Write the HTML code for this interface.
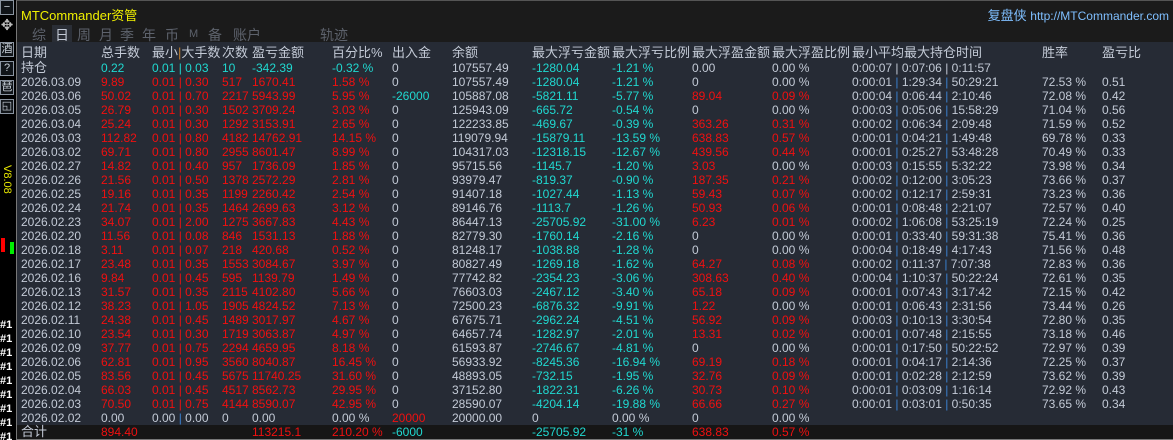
<!DOCTYPE html><html><head><meta charset="utf-8"><style>
*{margin:0;padding:0;box-sizing:border-box}
html,body{width:1173px;height:440px;overflow:hidden}
body{background:#000;font-family:"Liberation Sans","Noto Sans CJK SC",sans-serif;font-size:12px;position:relative}
#left{position:absolute;left:0;top:0;width:15px;height:440px;background:#000;overflow:hidden}
.btn{position:absolute;left:0;width:14px;height:15px;border:1px solid #8a94a0;color:#c8d0d8;font-size:11px;line-height:13px;text-align:center;background:#101418}
#top{position:absolute;left:16px;top:0;width:1157px;height:42px;background:#1b1b1b;border-top:1px solid #555;border-left:1px solid #777}
#tbl{position:absolute;left:16px;top:42px;width:1157px;height:398px;background:#262b35;border-left:1px solid #777}
.row{position:absolute;left:0;height:14px;width:1157px;line-height:14px;color:#c3cad6;white-space:nowrap}
.row span{position:absolute}
.h{font-size:13px;color:#c3cad6}
.a{left:4px}.b{left:84px}.cc{left:135px}.d{left:205px}.e{left:235px}.f{left:315px}.g{left:375px}.i{left:435px}.j{left:515px}.k{left:595px}.l{left:675px}.m{left:755px}.n{left:835px}.o{left:1025px}.p{left:1085px}
.r{color:#f01010}.c{color:#20d8d0}
.p1{color:#3a80d0;font-style:normal}
.tab{position:absolute;top:24px;color:#5d626c;font-size:14px}
</style></head><body>
<div id="left">
<div class="btn" style="top:0">−</div>
<div class="btn" style="top:19px;border:none;background:none;font-size:15px;color:#bbb">✥</div>
<div class="btn" style="top:42px">酒</div>
<div class="btn" style="top:61px">?</div>
<div class="btn" style="top:80px">琶</div>
<div class="btn" style="top:99px">◱</div>
<div style="position:absolute;top:165px;color:#e8e800;font-size:11px;transform:rotate(90deg);transform-origin:left top;left:13px;">V8.08</div>
<div style="position:absolute;left:1px;top:238px;width:4px;height:14px;background:#f00"></div>
<div style="position:absolute;left:10px;top:242px;width:4px;height:12px;background:#0e0"></div>
<div style="position:absolute;left:0;top:318px;height:122px;overflow:hidden;color:#fff;font-size:11px;line-height:14px;font-weight:bold">#1<br>#1<br>#1<br>#1<br>#1<br>#1<br>#1<br>#1<br>#1</div>
</div>
<div id="top">
<div style="position:absolute;left:4px;top:4px;color:#f0f000;font-size:13px">MTCommander资管</div>
<div style="position:absolute;right:4px;top:4px;color:#7fbfff;font-size:13px">复盘侠 <span style="font-size:12px">http://MTCommander.com</span></div>
<div class="tab" style="left:15px">综</div>
<div class="tab" style="color:#c3cad6;background:#2a2e36;padding:0 3px;left:35px">日</div>
<div class="tab" style="left:60px">周</div>
<div class="tab" style="left:82px">月</div>
<div class="tab" style="left:103px">季</div>
<div class="tab" style="left:125px">年</div>
<div class="tab" style="left:148px">币</div>
<div class="tab" style="left:172px;font-size:11px;top:27px">M</div>
<div class="tab" style="left:191px">备</div>
<div class="tab" style="left:216px">账户</div>
<div class="tab" style="left:303px">轨迹</div>
</div>
<div id="tbl">
<div class="row h" style="top:4px"><span class="a">日期</span><span class="b">总手数</span><span class="cc">最小<span style="position:static;color:#c08030">|</span>大手数</span><span class="d">次数</span><span class="e">盈亏金额</span><span class="f">百分比%</span><span class="g">出入金</span><span class="i">余额</span><span class="j">最大浮亏金额</span><span class="k">最大浮亏比例</span><span class="l">最大浮盈金额</span><span class="m">最大浮盈比例</span><span class="n">最小平均最大持仓时间</span><span class="o">胜率</span><span class="p">盈亏比</span></div>
<div class="row" style="top:19px"><span class="a h">持仓</span><span class="b c">0.22</span><span class="cc c">0.01 | 0.03</span><span class="d c">10</span><span class="e c">-342.39</span><span class="f c">-0.32 %</span><span class="g">0</span><span class="i">107557.49</span><span class="j c">-1280.04</span><span class="k c">-1.21 %</span><span class="l">0.00</span><span class="m">0.00 %</span><span class="n">0:00:07 | 0:07:06 | 0:11:57</span></div>
<div class="row" style="top:33px"><span class="a">2026.03.09</span><span class="b r">9.89</span><span class="cc r">0.01 | 0.30</span><span class="d r">517</span><span class="e r">1670.41</span><span class="f r">1.58 %</span><span class="g">0</span><span class="i">107557.49</span><span class="j c">-1280.04</span><span class="k c">-1.21 %</span><span class="l">0</span><span class="m">0.00 %</span><span class="n">0:00:01 <i class="p1">|</i> 1:29:34 <i class="p1">|</i> 50:29:21</span><span class="o">72.53 %</span><span class="p">0.51</span></div>
<div class="row" style="top:47px"><span class="a">2026.03.06</span><span class="b r">50.02</span><span class="cc r">0.01 | 0.70</span><span class="d r">2217</span><span class="e r">5943.99</span><span class="f r">5.95 %</span><span class="g c">-26000</span><span class="i">105887.08</span><span class="j c">-5821.11</span><span class="k c">-5.77 %</span><span class="l r">89.04</span><span class="m r">0.09 %</span><span class="n">0:00:04 <i class="p1">|</i> 0:06:44 <i class="p1">|</i> 2:10:46</span><span class="o">72.08 %</span><span class="p">0.42</span></div>
<div class="row" style="top:61px"><span class="a">2026.03.05</span><span class="b r">26.79</span><span class="cc r">0.01 | 0.30</span><span class="d r">1502</span><span class="e r">3709.24</span><span class="f r">3.03 %</span><span class="g">0</span><span class="i">125943.09</span><span class="j c">-665.72</span><span class="k c">-0.54 %</span><span class="l">0</span><span class="m">0.00 %</span><span class="n">0:00:03 <i class="p1">|</i> 0:05:06 <i class="p1">|</i> 15:58:29</span><span class="o">71.04 %</span><span class="p">0.56</span></div>
<div class="row" style="top:75px"><span class="a">2026.03.04</span><span class="b r">25.24</span><span class="cc r">0.01 | 0.30</span><span class="d r">1292</span><span class="e r">3153.91</span><span class="f r">2.65 %</span><span class="g">0</span><span class="i">122233.85</span><span class="j c">-469.67</span><span class="k c">-0.39 %</span><span class="l r">363.26</span><span class="m r">0.31 %</span><span class="n">0:00:02 <i class="p1">|</i> 0:06:34 <i class="p1">|</i> 2:09:48</span><span class="o">71.59 %</span><span class="p">0.52</span></div>
<div class="row" style="top:89px"><span class="a">2026.03.03</span><span class="b r">112.82</span><span class="cc r">0.01 | 0.80</span><span class="d r">4182</span><span class="e r">14762.91</span><span class="f r">14.15 %</span><span class="g">0</span><span class="i">119079.94</span><span class="j c">-15879.11</span><span class="k c">-13.59 %</span><span class="l r">638.83</span><span class="m r">0.57 %</span><span class="n">0:00:01 <i class="p1">|</i> 0:04:21 <i class="p1">|</i> 1:49:48</span><span class="o">69.78 %</span><span class="p">0.33</span></div>
<div class="row" style="top:103px"><span class="a">2026.03.02</span><span class="b r">69.71</span><span class="cc r">0.01 | 0.80</span><span class="d r">2955</span><span class="e r">8601.47</span><span class="f r">8.99 %</span><span class="g">0</span><span class="i">104317.03</span><span class="j c">-12318.15</span><span class="k c">-12.67 %</span><span class="l r">439.56</span><span class="m r">0.44 %</span><span class="n">0:00:01 <i class="p1">|</i> 0:25:27 <i class="p1">|</i> 53:48:28</span><span class="o">70.49 %</span><span class="p">0.33</span></div>
<div class="row" style="top:117px"><span class="a">2026.02.27</span><span class="b r">14.82</span><span class="cc r">0.01 | 0.40</span><span class="d r">957</span><span class="e r">1736.09</span><span class="f r">1.85 %</span><span class="g">0</span><span class="i">95715.56</span><span class="j c">-1145.7</span><span class="k c">-1.20 %</span><span class="l r">3.03</span><span class="m">0.00 %</span><span class="n">0:00:03 <i class="p1">|</i> 0:15:55 <i class="p1">|</i> 5:32:22</span><span class="o">73.98 %</span><span class="p">0.34</span></div>
<div class="row" style="top:131px"><span class="a">2026.02.26</span><span class="b r">21.56</span><span class="cc r">0.01 | 0.50</span><span class="d r">1378</span><span class="e r">2572.29</span><span class="f r">2.81 %</span><span class="g">0</span><span class="i">93979.47</span><span class="j c">-819.37</span><span class="k c">-0.90 %</span><span class="l r">187.35</span><span class="m r">0.21 %</span><span class="n">0:00:02 <i class="p1">|</i> 0:12:00 <i class="p1">|</i> 3:05:23</span><span class="o">73.66 %</span><span class="p">0.37</span></div>
<div class="row" style="top:145px"><span class="a">2026.02.25</span><span class="b r">19.16</span><span class="cc r">0.01 | 0.35</span><span class="d r">1199</span><span class="e r">2260.42</span><span class="f r">2.54 %</span><span class="g">0</span><span class="i">91407.18</span><span class="j c">-1027.44</span><span class="k c">-1.13 %</span><span class="l r">59.43</span><span class="m r">0.07 %</span><span class="n">0:00:02 <i class="p1">|</i> 0:12:17 <i class="p1">|</i> 2:59:31</span><span class="o">73.23 %</span><span class="p">0.36</span></div>
<div class="row" style="top:159px"><span class="a">2026.02.24</span><span class="b r">21.74</span><span class="cc r">0.01 | 0.35</span><span class="d r">1464</span><span class="e r">2699.63</span><span class="f r">3.12 %</span><span class="g">0</span><span class="i">89146.76</span><span class="j c">-1113.7</span><span class="k c">-1.26 %</span><span class="l r">50.93</span><span class="m r">0.06 %</span><span class="n">0:00:01 <i class="p1">|</i> 0:08:48 <i class="p1">|</i> 2:21:07</span><span class="o">72.57 %</span><span class="p">0.40</span></div>
<div class="row" style="top:173px"><span class="a">2026.02.23</span><span class="b r">34.07</span><span class="cc r">0.01 | 2.00</span><span class="d r">1275</span><span class="e r">3667.83</span><span class="f r">4.43 %</span><span class="g">0</span><span class="i">86447.13</span><span class="j c">-25705.92</span><span class="k c">-31.00 %</span><span class="l r">6.23</span><span class="m r">0.01 %</span><span class="n">0:00:02 <i class="p1">|</i> 1:06:08 <i class="p1">|</i> 53:25:19</span><span class="o">72.24 %</span><span class="p">0.25</span></div>
<div class="row" style="top:187px"><span class="a">2026.02.20</span><span class="b r">11.56</span><span class="cc r">0.01 | 0.08</span><span class="d r">846</span><span class="e r">1531.13</span><span class="f r">1.88 %</span><span class="g">0</span><span class="i">82779.30</span><span class="j c">-1760.14</span><span class="k c">-2.16 %</span><span class="l">0</span><span class="m">0.00 %</span><span class="n">0:00:01 <i class="p1">|</i> 0:33:40 <i class="p1">|</i> 59:31:38</span><span class="o">75.41 %</span><span class="p">0.36</span></div>
<div class="row" style="top:201px"><span class="a">2026.02.18</span><span class="b r">3.11</span><span class="cc r">0.01 | 0.07</span><span class="d r">218</span><span class="e r">420.68</span><span class="f r">0.52 %</span><span class="g">0</span><span class="i">81248.17</span><span class="j c">-1038.88</span><span class="k c">-1.28 %</span><span class="l">0</span><span class="m">0.00 %</span><span class="n">0:00:04 <i class="p1">|</i> 0:18:49 <i class="p1">|</i> 4:17:43</span><span class="o">71.56 %</span><span class="p">0.48</span></div>
<div class="row" style="top:215px"><span class="a">2026.02.17</span><span class="b r">23.48</span><span class="cc r">0.01 | 0.35</span><span class="d r">1553</span><span class="e r">3084.67</span><span class="f r">3.97 %</span><span class="g">0</span><span class="i">80827.49</span><span class="j c">-1269.18</span><span class="k c">-1.62 %</span><span class="l r">64.27</span><span class="m r">0.08 %</span><span class="n">0:00:02 <i class="p1">|</i> 0:11:37 <i class="p1">|</i> 7:07:38</span><span class="o">72.83 %</span><span class="p">0.36</span></div>
<div class="row" style="top:229px"><span class="a">2026.02.16</span><span class="b r">9.84</span><span class="cc r">0.01 | 0.45</span><span class="d r">595</span><span class="e r">1139.79</span><span class="f r">1.49 %</span><span class="g">0</span><span class="i">77742.82</span><span class="j c">-2354.23</span><span class="k c">-3.06 %</span><span class="l r">308.63</span><span class="m r">0.40 %</span><span class="n">0:00:04 <i class="p1">|</i> 1:10:37 <i class="p1">|</i> 50:22:24</span><span class="o">72.61 %</span><span class="p">0.35</span></div>
<div class="row" style="top:243px"><span class="a">2026.02.13</span><span class="b r">31.57</span><span class="cc r">0.01 | 0.35</span><span class="d r">2115</span><span class="e r">4102.80</span><span class="f r">5.66 %</span><span class="g">0</span><span class="i">76603.03</span><span class="j c">-2467.12</span><span class="k c">-3.40 %</span><span class="l r">65.18</span><span class="m r">0.09 %</span><span class="n">0:00:01 <i class="p1">|</i> 0:07:43 <i class="p1">|</i> 3:17:42</span><span class="o">72.15 %</span><span class="p">0.42</span></div>
<div class="row" style="top:257px"><span class="a">2026.02.12</span><span class="b r">38.23</span><span class="cc r">0.01 | 1.05</span><span class="d r">1905</span><span class="e r">4824.52</span><span class="f r">7.13 %</span><span class="g">0</span><span class="i">72500.23</span><span class="j c">-6876.32</span><span class="k c">-9.91 %</span><span class="l r">1.22</span><span class="m">0.00 %</span><span class="n">0:00:01 <i class="p1">|</i> 0:06:43 <i class="p1">|</i> 2:31:56</span><span class="o">73.44 %</span><span class="p">0.26</span></div>
<div class="row" style="top:271px"><span class="a">2026.02.11</span><span class="b r">24.38</span><span class="cc r">0.01 | 0.45</span><span class="d r">1489</span><span class="e r">3017.97</span><span class="f r">4.67 %</span><span class="g">0</span><span class="i">67675.71</span><span class="j c">-2962.24</span><span class="k c">-4.51 %</span><span class="l r">56.92</span><span class="m r">0.09 %</span><span class="n">0:00:03 <i class="p1">|</i> 0:10:13 <i class="p1">|</i> 3:30:54</span><span class="o">72.80 %</span><span class="p">0.35</span></div>
<div class="row" style="top:285px"><span class="a">2026.02.10</span><span class="b r">23.54</span><span class="cc r">0.01 | 0.30</span><span class="d r">1719</span><span class="e r">3063.87</span><span class="f r">4.97 %</span><span class="g">0</span><span class="i">64657.74</span><span class="j c">-1282.97</span><span class="k c">-2.01 %</span><span class="l r">13.31</span><span class="m r">0.02 %</span><span class="n">0:00:01 <i class="p1">|</i> 0:07:48 <i class="p1">|</i> 2:15:55</span><span class="o">73.18 %</span><span class="p">0.46</span></div>
<div class="row" style="top:299px"><span class="a">2026.02.09</span><span class="b r">37.77</span><span class="cc r">0.01 | 0.75</span><span class="d r">2294</span><span class="e r">4659.95</span><span class="f r">8.18 %</span><span class="g">0</span><span class="i">61593.87</span><span class="j c">-2746.67</span><span class="k c">-4.81 %</span><span class="l">0</span><span class="m">0.00 %</span><span class="n">0:00:01 <i class="p1">|</i> 0:17:50 <i class="p1">|</i> 50:22:52</span><span class="o">72.97 %</span><span class="p">0.39</span></div>
<div class="row" style="top:313px"><span class="a">2026.02.06</span><span class="b r">62.81</span><span class="cc r">0.01 | 0.95</span><span class="d r">3560</span><span class="e r">8040.87</span><span class="f r">16.45 %</span><span class="g">0</span><span class="i">56933.92</span><span class="j c">-8245.36</span><span class="k c">-16.94 %</span><span class="l r">69.19</span><span class="m r">0.18 %</span><span class="n">0:00:01 <i class="p1">|</i> 0:04:17 <i class="p1">|</i> 2:14:36</span><span class="o">72.25 %</span><span class="p">0.37</span></div>
<div class="row" style="top:327px"><span class="a">2026.02.05</span><span class="b r">83.56</span><span class="cc r">0.01 | 0.45</span><span class="d r">5675</span><span class="e r">11740.25</span><span class="f r">31.60 %</span><span class="g">0</span><span class="i">48893.05</span><span class="j c">-732.15</span><span class="k c">-1.95 %</span><span class="l r">32.76</span><span class="m r">0.09 %</span><span class="n">0:00:01 <i class="p1">|</i> 0:02:28 <i class="p1">|</i> 2:12:59</span><span class="o">73.62 %</span><span class="p">0.39</span></div>
<div class="row" style="top:341px"><span class="a">2026.02.04</span><span class="b r">66.03</span><span class="cc r">0.01 | 0.45</span><span class="d r">4517</span><span class="e r">8562.73</span><span class="f r">29.95 %</span><span class="g">0</span><span class="i">37152.80</span><span class="j c">-1822.31</span><span class="k c">-6.26 %</span><span class="l r">30.73</span><span class="m r">0.10 %</span><span class="n">0:00:01 <i class="p1">|</i> 0:03:09 <i class="p1">|</i> 1:16:14</span><span class="o">72.92 %</span><span class="p">0.43</span></div>
<div class="row" style="top:355px"><span class="a">2026.02.03</span><span class="b r">70.50</span><span class="cc r">0.01 | 0.75</span><span class="d r">4144</span><span class="e r">8590.07</span><span class="f r">42.95 %</span><span class="g">0</span><span class="i">28590.07</span><span class="j c">-4204.14</span><span class="k c">-19.88 %</span><span class="l r">66.66</span><span class="m r">0.27 %</span><span class="n">0:00:01 <i class="p1">|</i> 0:03:01 <i class="p1">|</i> 0:50:35</span><span class="o">73.65 %</span><span class="p">0.34</span></div>
<div class="row" style="top:369px"><span class="a">2026.02.02</span><span class="b">0.00</span><span class="cc">0.00 <i class="p1">|</i> 0.00</span><span class="d">0</span><span class="e">0.00</span><span class="f">0.00 %</span><span class="g r">20000</span><span class="i">20000.00</span><span class="j">0</span><span class="k">0.00 %</span><span class="l">0</span><span class="m">0.00 %</span></div>
<div style="position:absolute;left:0;top:383px;width:1157px;height:14px;background:#161616"></div>
<div class="row" style="top:383px"><span class="a h">合计</span><span class="b r">894.40</span><span class="e r">113215.1</span><span class="f r">210.20 %</span><span class="g c">-6000</span><span class="j c">-25705.92</span><span class="k c">-31 %</span><span class="l r">638.83</span><span class="m r">0.57 %</span></div>
<div style="position:absolute;left:0;top:397px;width:1157px;height:1px;background:#777"></div>
</div>
</body></html>
